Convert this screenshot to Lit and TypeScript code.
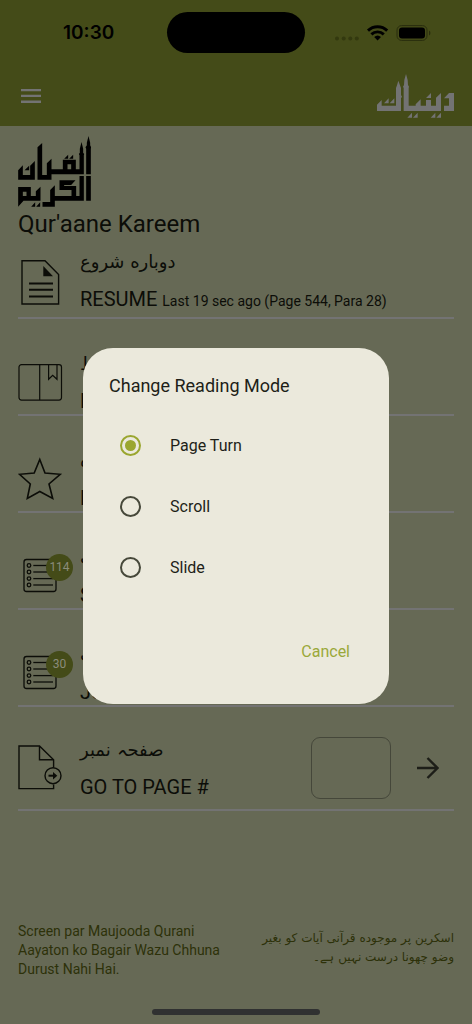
import { LitElement, html, svg, css } from "lit";
import { customElement, state } from "lit/decorators.js";

const resumeIcon = svg`<svg class="icon" width="46" height="46" viewBox="0 0 46 46" fill="none" stroke="#0c0d08" stroke-width="1.4">
  <path d="M4 1.7H27L40.6 15.5V45H4z"/><path d="M25.3 7V17.3H35z" fill="#0c0d08" stroke="none"/>
  <path d="M11 24.5H35M11 30.7H35M11 37.5H35" stroke-width="2"/></svg>`;
const bookIcon = svg`<svg class="icon" width="46" height="46" viewBox="0 0 46 46" fill="none" stroke="#0c0d08" stroke-width="1.2">
  <rect x="1" y="4.6" width="42.5" height="35.5" rx="2.5"/><path d="M21.7 4.6V40M30.6 5V19.3L34.7 15.3L39 19.3V5"/></svg>`;
const starIcon = svg`<svg class="icon" width="46" height="46" viewBox="0 0 46 46" fill="none" stroke="#0c0d08" stroke-width="1.6">
  <path d="M21.8 2.5L27 16L42.2 17.3L31 27L34.7 41.5L21.8 34.5L9.3 41.5L12.3 27L1.5 17.3L16.2 16z"/></svg>`;
const listIcon = svg`<svg class="icon" width="46" height="46" viewBox="0 0 46 46" fill="none" stroke="#0c0d08" stroke-width="1.3">
  <rect x="6" y="5.5" width="32" height="32" rx="2.5"/>
  ${[11.5, 18, 24.6, 31].map((y) => svg`<circle cx="11" cy=${y} r="1.8"/><path d=${`M15.3 ${y}H35`}/>`)}</svg>`;
const pageIcon = svg`<svg class="icon" width="46" height="46" viewBox="0 0 46 46" fill="none" stroke="#0c0d08" stroke-width="1.4">
  <path d="M35.6 22.5V14.8L21.5 1H1V43.6H35.6V39.5M21.5 1V14.8H35.6"/><circle cx="35" cy="30.7" r="8"/>
  <path d="M30.5 30.7H36" stroke-width="2"/><path d="M35 27L39.3 30.7L35 34.4z" fill="#0c0d08" stroke="none"/></svg>`;

@customElement("app-root")
export class AppRoot extends LitElement {
  static styles = css`
    * { box-sizing: border-box; }
    :host {
      display: flex; flex-direction: column; position: relative; min-height: 100vh;
      background: #666955; color: #0c0d08; font-family: Roboto, sans-serif;
    }
    button { border: 0; padding: 0; background: none; font: inherit; cursor: pointer; }
    svg { display: block; flex: none; }
    h1, h2, p { margin: 0; font-weight: 400; }
    header { background: #444b18; padding: 12px 18px 8px; }
    .status { display: grid; grid-template-columns: 1fr 138px 1fr; align-items: center; }
    .time { font: 600 19px/24px Inter, sans-serif; color: #000; padding-left: 45px; }
    .island { height: 41px; border-radius: 24px; background: #000; }
    .signals { justify-self: end; margin-right: 23px; }
    .bar { display: flex; justify-content: space-between; align-items: center; padding-top: 21px; }
    .menu { padding: 3px; }
    main { padding: 10px 18px 0; }
    h1 { font-size: 24px; line-height: 28px; padding-top: 3px; }
    .row { display: flex; align-items: center; height: 97px; padding-top: 32px; gap: 16px; border-bottom: 2px solid #737373; }
    .row.first { height: 81px; padding-top: 8px; }
    .row.goto { height: 104px; padding-top: 20px; }
    .pic { position: relative; }
    .badge {
      position: absolute; left: 28px; top: 0; width: 27px; height: 27px; border-radius: 50%;
      background: #444b18; color: #8b8c7c; font-size: 12px; line-height: 27px; text-align: center;
    }
    .text { flex: 1; display: flex; flex-direction: column; gap: 13px; }
    .urdu { font: 18px/24px "DejaVu Sans", sans-serif; }
    .main { font-size: 20px; line-height: 24px; white-space: nowrap; }
    .note { font-size: 14px; }
    .page { width: 80px; height: 62px; border: 1px solid #45473a; border-radius: 9px; background: none; font: 20px Roboto, sans-serif; text-align: center; }
    .go { padding: 8px 15px 8px 10px; }
    footer { margin-top: auto; padding: 0 18px 9px; }
    .notes { display: flex; justify-content: space-between; color: #2d3109; font-size: 14px; line-height: 19px; }
    .latin { width: 210px; }
    .arabic { width: 200px; padding-top: 7px; font: 12px/19px "DejaVu Sans", sans-serif; }
    .home { width: 168px; height: 6px; border-radius: 3px; background: #303131; margin: 30px auto 0; }
    .scrim { position: absolute; inset: 0; display: flex; align-items: center; justify-content: center; padding: 27px 83px 0; }
    .dialog { flex: 1; max-width: 560px; border-radius: 30px; background: #ebe9dc; color: #1e1f18; padding: 26px; }
    .dialog h2 { font-size: 18px; line-height: 24px; padding-bottom: 17px; }
    .choice { display: flex; align-items: center; gap: 29px; height: 61px; padding-left: 11px; font-size: 16px; cursor: pointer; }
    .choice input {
      appearance: none; margin: 0; width: 21px; height: 21px; border-radius: 50%;
      border: 2px solid #46483a; padding: 3px; background-clip: content-box;
    }
    .choice input:checked { border-color: #9aa62f; background-color: #9aa62f; }
    .actions { display: flex; justify-content: flex-end; padding: 42px 13px 14px 0; }
    .cancel { color: #9aa83a; font-size: 16px; line-height: 24px; }
  `;

  @state() mode = "Page Turn";
  @state() open = true;

  row(icon: unknown, urdu: string, label: string, badge = "") {
    return html`<div class="row"><div class="pic">${icon}${badge ? html`<span class="badge">${badge}</span>` : ""}</div>
      <div class="text"><div class="urdu" lang="ur">${urdu}</div><div class="main">${label}</div></div></div>`;
  }

  render() {
    return html`
      <header>
        <div class="status">
          <span class="time">10:30</span><span class="island"></span>
          <svg class="signals" width="97" height="18" viewBox="334 23 97 18">
            <g fill="#33390f"><circle cx="337" cy="37.5" r="2"/><circle cx="343.7" cy="37.5" r="2"/><circle cx="350.3" cy="37.5" r="2"/><circle cx="356.8" cy="37.5" r="2"/></g>
            <g fill="none" stroke="#000" stroke-width="2.9"><path d="M368 29.6a13.8 13.8 0 0 1 19.2 0M371.4 33.4a9 9 0 0 1 12.4 0"/></g>
            <path d="M377.6 39.4l-3.4-3.3a5 5 0 0 1 6.8 0z"/>
            <rect x="397" y="24.6" width="30" height="14.8" rx="4.5" fill="none" stroke="#292d0e"/>
            <rect x="399" y="26.6" width="26" height="10.8" rx="3"/><path d="M429 29.5v5q1.4-.8 1.4-2.5t-1.4-2.5z" fill="#292d0e"/>
          </svg>
        </div>
        <div class="bar">
          <button class="menu" aria-label="Menu"><svg width="20" height="14" viewBox="0 0 20 14" fill="#737373"><path d="M0 0H20V2.3H0zM0 5.8H20V8.1H0zM0 11.6H20V13.9H0z"/></svg></button>
          <svg width="77" height="44" viewBox="1131 222 231 132" fill="#737373" role="img" aria-label="Deeniyat">
            <path d="M1131 333V314L1145 300V317H1188V264L1191 256L1195 242L1200 256L1203 264V285L1206 290L1203 295V333zM1211 333V264L1209 260L1212 255L1213 240L1218 222L1223 240L1224 255L1227 260L1226 264V317H1247V313L1262 298V317H1278V300H1293V317H1308V293L1323 279V333z"/>
            <path d="M1332 295L1347 279H1362V333H1332V317H1347V295zM1152 310L1166 295V310zM1169 310L1183 295V310zM1278 294L1293 279V294zM1222 353L1236 338V353zM1239 353L1253 338V353zM1292 353L1306 338V353zM1309 353L1323 338V353z"/>
          </svg>
        </div>
      </header>
      <main>
        <svg width="73" height="71" viewBox="54 30 218 213" fill="#000" role="img" aria-label="Al Quran Al Kareem">
          <path fill-rule="evenodd" d="M54 161V133L68 118V147H90V119L104 105V161zM73 133L87 119V133zM112 161V64L126 51V147H140V112L154 98V130H188V101H227V130H238V88L236 84L239 80V68L244 48L249 68V80L252 84L251 88V145H154V161zM202 130H213V115H202zM192 98L204 86V98zM207 98L219 86V98zM258 145V68L256 64L260 58V50L265 30L270 50V58L273 64L272 68V145z"/>
          <path fill-rule="evenodd" d="M258 150H272V224H258zM238 150H251V224H164V242H127V228H150V192L164 178V210H214V192H178V163H226L213 177H192V180H228V210H238zM54 242V183H92V210H107V196L121 182V224H70zM68 210H79V197H68zM93 242L105 229V242zM108 242L120 229V242z"/>
        </svg>
        <h1>Qur'aane Kareem</h1>
        <div class="row first"><div class="pic">${resumeIcon}</div>
          <div class="text"><div class="urdu" lang="ur">دوباره شروع</div><div class="main">RESUME <span class="note">Last 19 sec ago (Page 544, Para 28)</span></div></div></div>
        ${this.row(bookIcon, "محفوظ", "BOOKMARK")}
        ${this.row(starIcon, "پسندیده", "FAVOURITE")}
        ${this.row(listIcon, "سورت", "SURAH", "114")}
        ${this.row(listIcon, "پارہ فہرست", "JUZ", "30")}
        <div class="row goto"><div class="pic">${pageIcon}</div>
          <label class="text" for="page"><span class="urdu" lang="ur">صفحہ نمبر</span><span class="main">GO TO PAGE #</span></label>
          <input class="page" id="page" inputmode="numeric">
          <button class="go" aria-label="Go"><svg width="22" height="22" viewBox="0 0 22 22" fill="none" stroke="#1d1e18" stroke-width="2.4"><path d="M0 11H20M10.5 1L20.5 11L10.5 21"/></svg></button>
        </div>
      </main>
      <footer>
        <div class="notes">
          <p class="latin">Screen par Maujooda Qurani Aayaton ko Bagair Wazu Chhuna Durust Nahi Hai.</p>
          <p class="arabic" dir="rtl" lang="ur">اسکرین پر موجوده قرآنی آیات کو بغیر<br>وضو چھونا درست نہیں ہے۔</p>
        </div>
        <div class="home"></div>
      </footer>
      ${this.open ? html`<div class="scrim"><div class="dialog" role="dialog" aria-labelledby="title">
        <h2 id="title">Change Reading Mode</h2>
        ${["Page Turn", "Scroll", "Slide"].map((m) => html`<label class="choice"><input type="radio" name="mode" .checked=${m === this.mode} @change=${() => (this.mode = m)}>${m}</label>`)}
        <div class="actions"><button class="cancel" @click=${() => (this.open = false)}>Cancel</button></div>
      </div></div>` : ""}
    `;
  }
}
